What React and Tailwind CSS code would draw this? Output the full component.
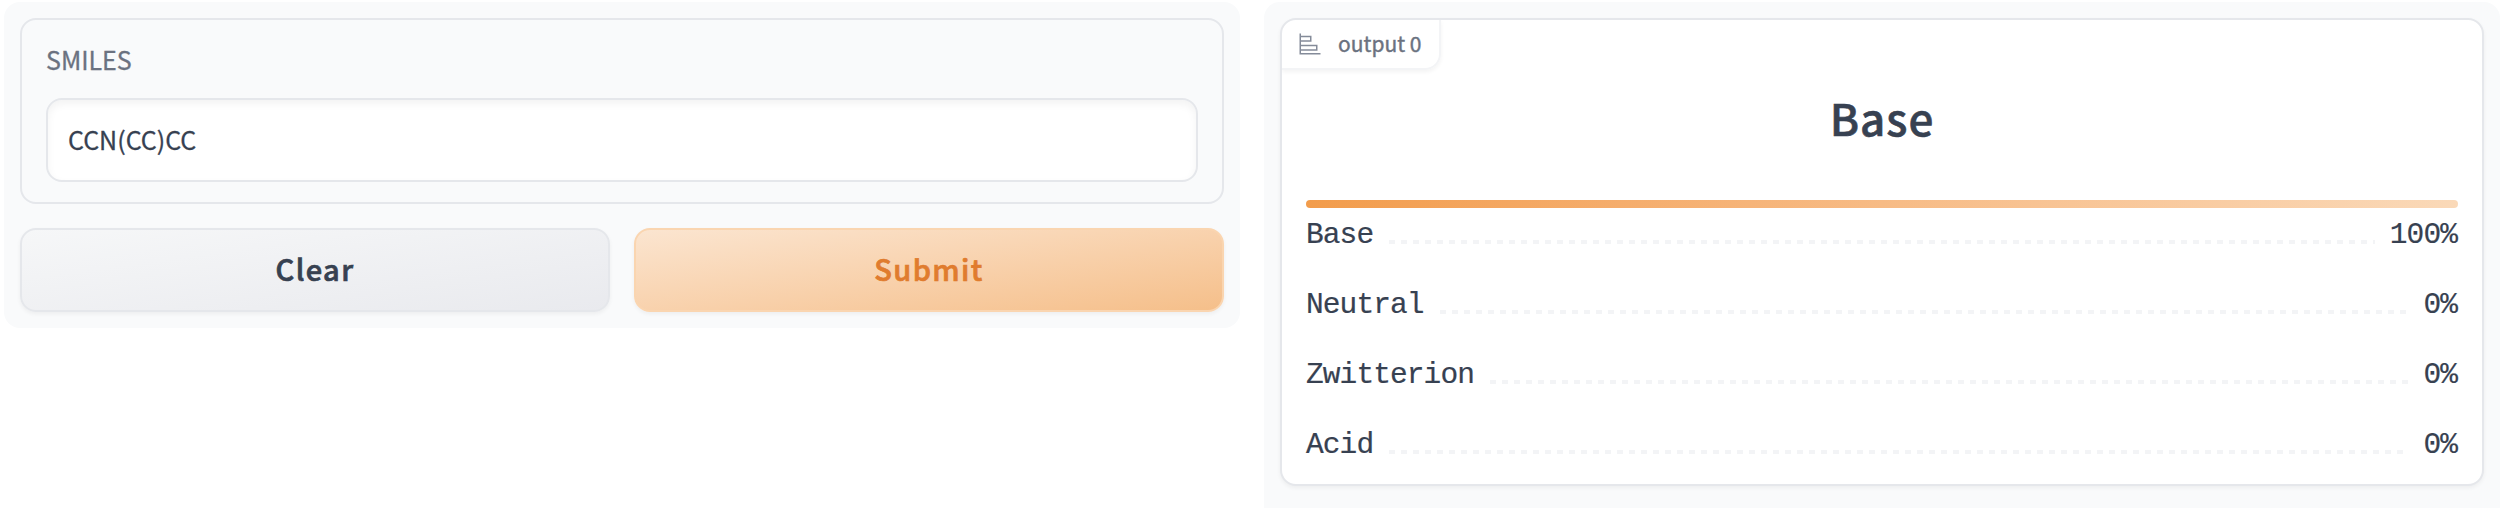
const sans = "font-['Noto_Sans_CJK_SC','Noto_Sans',sans-serif]";

const rows = [
  { label: 'Base', value: '100%' },
  { label: 'Neutral', value: '0%' },
  { label: 'Zwitterion', value: '0%' },
  { label: 'Acid', value: '0%' },
];

function ChartIcon() {
  return (
    <svg viewBox="0 0 32 32" className="size-6 text-[#848b99]" fill="currentColor" aria-hidden="true">
      <path d="M4 2H2v28h28v-2H4v-3h22v-8H4v-4h14V5H4zm20 17v4H4v-4zM16 7v4H4V7z" />
    </svg>
  );
}

function InputPanel() {
  return (
    <section className="flex h-[326px] w-[1236px] flex-col gap-6 rounded-2xl bg-gray-50 p-4">
      <div className="flex h-[186px] flex-col rounded-2xl border-2 border-gray-200 px-6 pt-[23px]">
        <label htmlFor="smiles" className="h-[55px] text-[25px] leading-[32px] text-[#6b7280] [-webkit-text-stroke:0.3px]">
          SMILES
        </label>
        <input
          id="smiles"
          defaultValue="CCN(CC)CC"
          className="h-[84px] w-full rounded-2xl border-2 border-gray-200 bg-white px-5 pb-0.5 text-[25px] text-[#374151] shadow-[inset_0_4px_8px_rgba(0,0,0,0.05)] outline-none [-webkit-text-stroke:0.3px]"
        />
      </div>
      <div className="grid h-[84px] grid-cols-2 gap-6 text-[29px] font-medium">
        <button className="rounded-2xl border-2 border-gray-200 bg-linear-to-br from-[#f6f7f8] to-[#e9eaee] pb-0.5 tracking-[1.4px] text-[#374151] shadow-[0_2px_4px_rgba(0,0,0,0.05)] [-webkit-text-stroke:0.7px]">
          Clear
        </button>
        <button className="rounded-2xl border-2 border-[#fad5b0] bg-linear-to-br from-[#fbe5d0] to-[#f5bf8a] pb-0.5 tracking-[1.4px] text-[#e07c2e] shadow-[0_2px_4px_rgba(0,0,0,0.05)] [-webkit-text-stroke:0.7px]">
          Submit
        </button>
      </div>
    </section>
  );
}

function OutputPanel() {
  return (
    <section className="h-[520px] w-[1236px] rounded-2xl bg-gray-50 p-4">
      <div className="relative flex h-[468px] flex-col overflow-hidden rounded-2xl border-2 border-gray-200 bg-white px-6 shadow-[0_2px_4px_rgba(0,0,0,0.05)]">
        <div className="absolute top-0 left-0 flex h-[50px] w-[159px] items-center rounded-br-2xl border-r-2 border-b-2 border-gray-100 pl-4 text-[21px] text-[#6b7280] shadow-[0_2px_4px_rgba(0,0,0,0.05)]">
          <ChartIcon />
          <span className="ml-4 whitespace-nowrap [-webkit-text-stroke:0.4px]">output 0</span>
        </div>
        <h2 className="mt-[65px] text-center text-[44px] leading-[64px] font-medium tracking-[1px] text-[#374151] [-webkit-text-stroke:0.6px]">
          Base
        </h2>
        <div className="mt-[51px] h-2 rounded-full bg-linear-to-r from-[#f29c4b] to-[#fad9b8]" />
        <ul className="mt-[7px] flex flex-col gap-[30px] font-['Liberation_Mono',monospace] text-[29.5px] leading-10 tracking-[-0.9px] text-[#374151] [-webkit-text-stroke:0.2px]">
          {rows.map(({ label, value }) => (
            <li key={label} className="flex items-center gap-4">
              <span>{label}</span>
              <span className="mt-3.5 h-1 grow bg-[repeating-linear-gradient(90deg,#f3f4f6_0_6px,transparent_6px_12px)]" />
              <span className="-ml-px pr-px">{value}</span>
            </li>
          ))}
        </ul>
      </div>
    </section>
  );
}

export default function App() {
  return (
    <main className={`flex h-[508px] w-[2502px] items-start gap-6 overflow-hidden bg-white pt-0.5 pl-1 ${sans}`}>
      <InputPanel />
      <OutputPanel />
    </main>
  );
}
